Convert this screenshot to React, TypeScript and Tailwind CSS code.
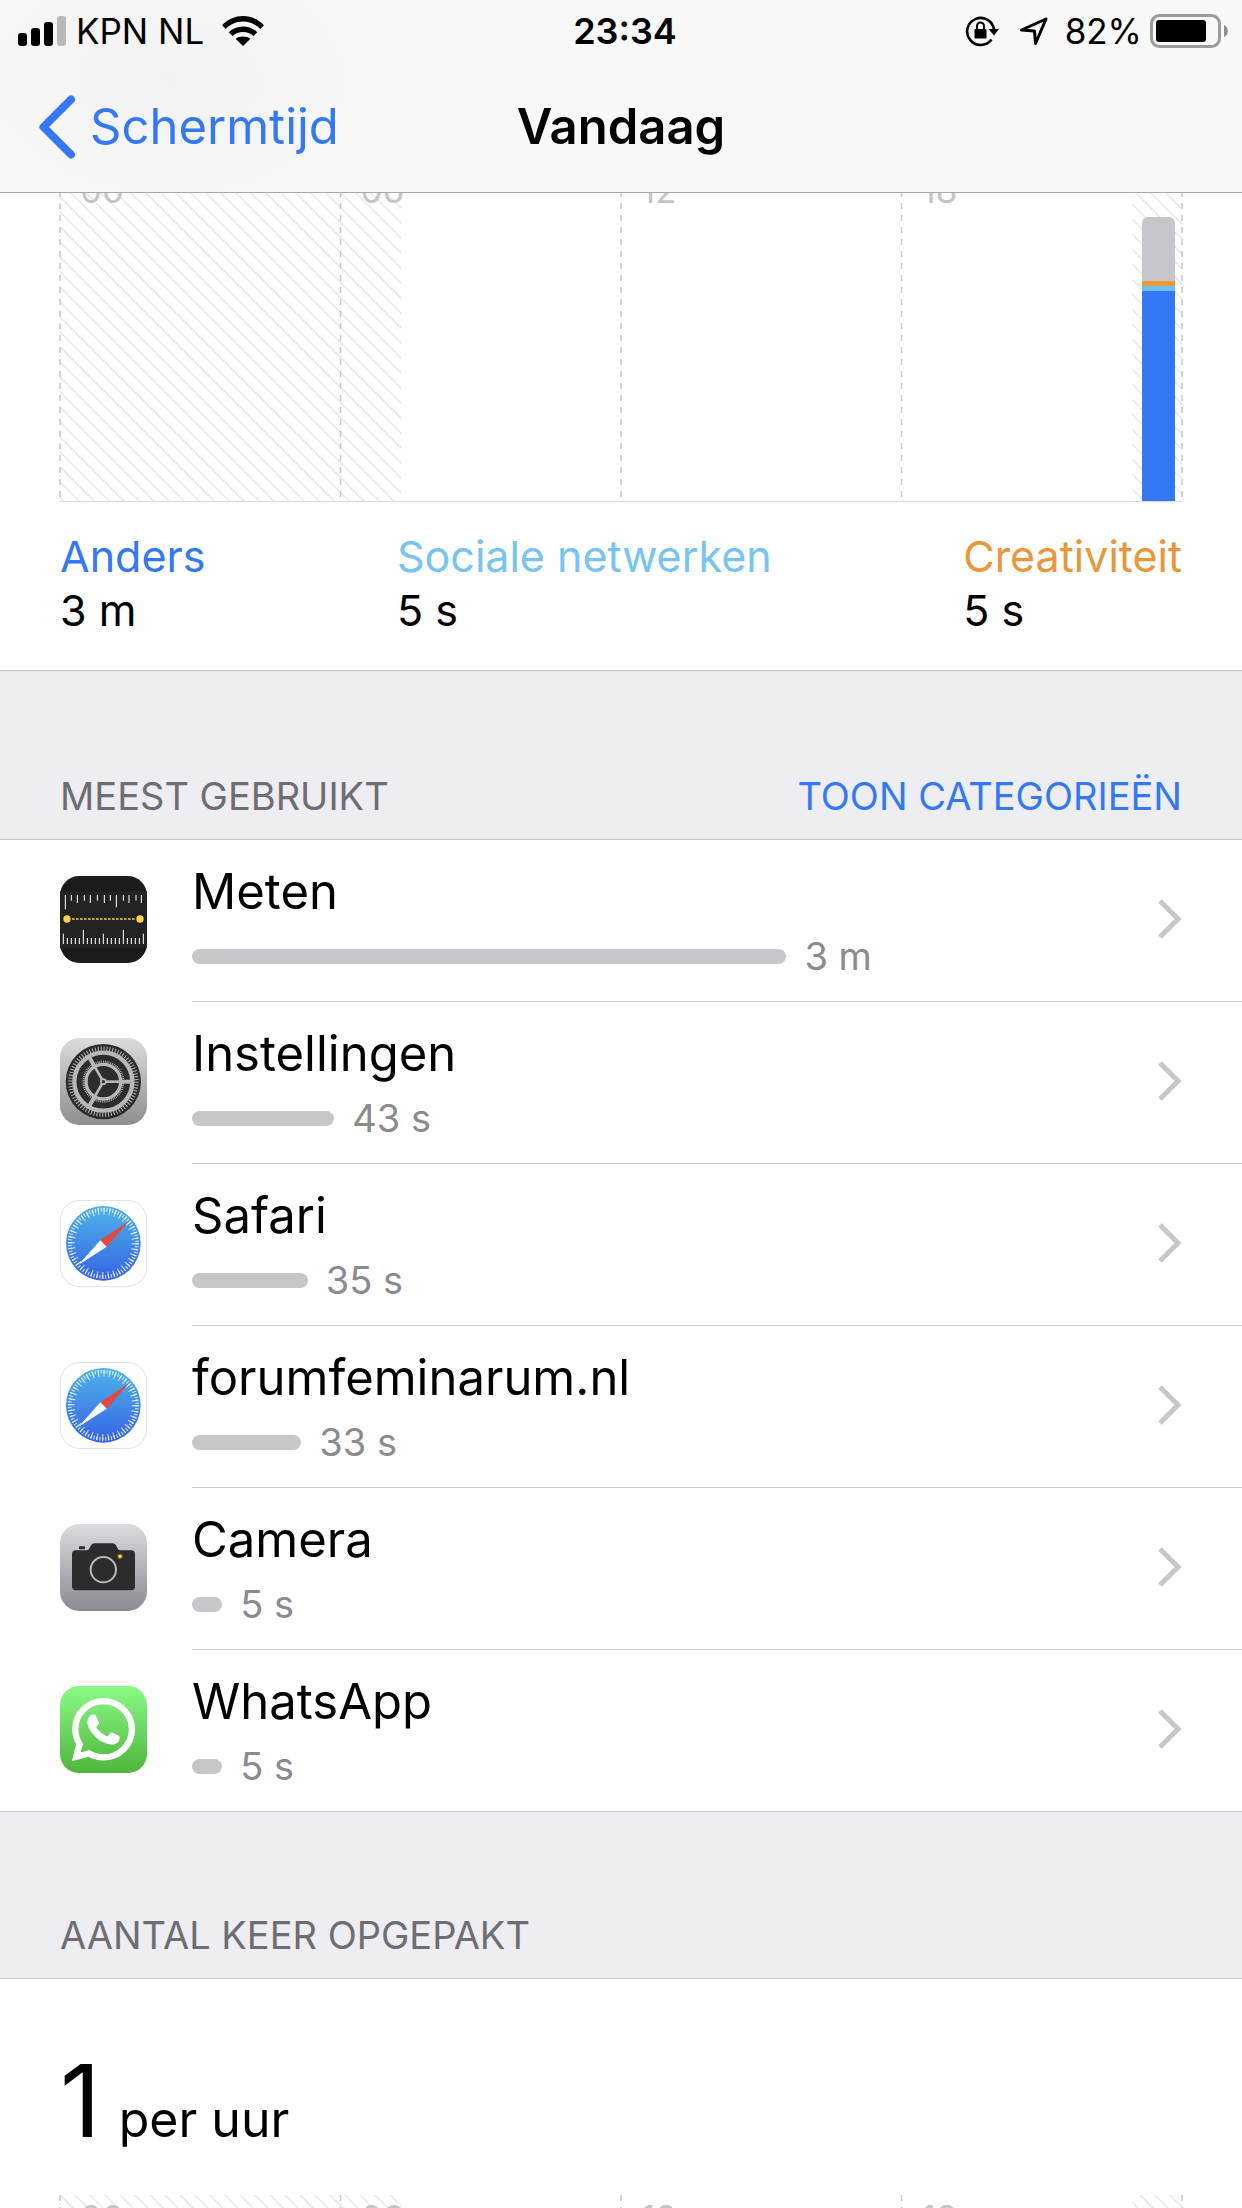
import { useId, type ReactNode } from 'react';
import { FaWhatsapp } from 'react-icons/fa';

/* ---------- Status bar ---------- */

function SignalBars() {
  return (
    <svg className="h-[30px] w-12 shrink-0" viewBox="0 0 48 30" aria-hidden="true">
      <rect x="0" y="17" width="9" height="13" rx="3" />
      <rect x="13" y="12" width="9" height="18" rx="3" />
      <rect x="26" y="6" width="9" height="24" rx="3" />
      <rect x="39" y="0" width="9" height="30" rx="3" fill="#b9b9b9" />
    </svg>
  );
}

function WifiIcon() {
  return (
    <svg className="h-[30px] w-[42px] shrink-0" viewBox="0 0 42 30" aria-hidden="true">
      <path d="M0 9.3C5.6 3.400 13 0 21 0s15.400 3.400 21 9.300l-3.700 3.700C33.700 8.300 27.600 5.600 21 5.600S8.300 8.300 3.700 13z" />
      <path d="M6.700 16.200C10.500 12.500 15.500 10.400 21 10.400s10.500 2.100 14.300 5.800l-3.800 3.800C28.700 17.400 25 15.900 21 15.900s-7.700 1.500-10.500 4.100z" />
      <path d="M13.600 22.800c2-1.500 4.600-2.300 7.400-2.300s5.400.8 7.400 2.300L21 30z" />
    </svg>
  );
}

function RotationLockIcon() {
  return (
    <svg className="h-8 w-[34px] shrink-0" viewBox="0 0 34 32" aria-hidden="true">
      <path d="M26.500 24.500A13.500 13.500 0 1 1 29 14.500" fill="none" stroke="#000" strokeWidth="2.600" />
      <path d="M23.500 14h10.500l-5 6.500z" />
      <rect x="9.500" y="14" width="12" height="9.500" rx="1" />
      <path d="M12 15.500v-4.500a3.500 3.500 0 0 1 7 0v4.500" fill="none" stroke="#000" strokeWidth="2" />
    </svg>
  );
}

function LocationIcon() {
  return (
    <svg className="h-[30px] w-[30px] shrink-0" viewBox="0 0 30 30" aria-hidden="true">
      <path d="M2.500 14 27 3 16.500 27.500 15.500 15z" fill="none" stroke="#000" strokeWidth="3" strokeLinejoin="round" />
    </svg>
  );
}

function BatteryIcon() {
  return (
    <svg className="h-[34px] w-[78px] shrink-0" viewBox="0 0 78 34" aria-hidden="true">
      <rect x="1.500" y="1.500" width="68" height="31" rx="8" fill="none" stroke="#9b9b9b" strokeWidth="3" />
      <rect x="6" y="6" width="50" height="22" rx="3" />
      <path d="M74 11c5 1.500 5 10.500 0 12z" fill="#8c8c8c" />
    </svg>
  );
}

function Header() {
  return (
    <header className="relative z-10 shrink-0 border-b border-[#a9a9ac] bg-[#f8f8f8] bg-[radial-gradient(ellipse_200px_130px_at_170px_80px,#f2f2f2,#f8f8f8)]">
      <div className="grid h-[62px] grid-cols-[1fr_auto_1fr] items-center pr-3.5 pl-[18px] text-[35px]">
        <div className="flex items-center">
          <SignalBars />
          <span className="ml-2.5">KPN NL</span>
          <span className="ml-[18px]"><WifiIcon /></span>
        </div>
        <time className="pl-1 text-[36px] font-semibold">23:34</time>
        <div className="flex items-center justify-end">
          <RotationLockIcon />
          <span className="ml-5"><LocationIcon /></span>
          <span className="ml-4">82%</span>
          <span className="ml-2"><BatteryIcon /></span>
        </div>
      </div>
      <nav className="grid h-[130px] grid-cols-[1fr_auto_1fr] items-center text-[49px]">
        <button type="button" className="flex items-center gap-3.5 justify-self-start pl-[38px] text-[#3478f6]">
          <svg className="h-16 w-[38px]" viewBox="0 0 38 64" fill="none" aria-hidden="true">
            <path d="M33 4.500 5.500 32 33 59.500" stroke="currentColor" strokeWidth="8" strokeLinecap="round" strokeLinejoin="round" />
          </svg>
          Schermtijd
        </button>
        <h1 className="font-semibold">Vandaag</h1>
      </nav>
    </header>
  );
}

/* ---------- Hourly chart ---------- */

const gridLines = ['0%', '25%', '50%', '75%', '100%'];
const hourLabels = ['00', '06', '12', '18'];

function HourChart({ children }: { children?: ReactNode }) {
  const hatch = useId();
  return (
    <div className="relative h-[335px] border-b border-[#dcdcde]">
      <svg className="absolute inset-0 h-full w-full overflow-visible" aria-hidden="true">
        <defs>
          <pattern id={hatch} width="15" height="15" patternUnits="userSpaceOnUse">
            <path d="M-2 -2 17 17M-2 13 2 17M13 -2 17 2" stroke="#e8e8ea" strokeWidth="1.500" />
          </pattern>
        </defs>
        <rect x="0" y="0" width="30.400%" height="100%" fill={`url(#${hatch})`} />
        <rect x="95.600%" y="0" width="4.400%" height="100%" fill={`url(#${hatch})`} />
        {gridLines.map((x) => (
          <line key={x} x1={x} x2={x} y1="0" y2="100%" stroke="#c8c8cc" strokeWidth="1.500" strokeDasharray="6 6" />
        ))}
      </svg>
      <div className="relative grid grid-cols-4 text-[35px] leading-[46px] text-[#c4c4c6]">
        {hourLabels.map((label) => (
          <span key={label} className="pl-5">{label}</span>
        ))}
      </div>
      {children}
    </div>
  );
}

const categories = [
  { name: 'Anders', time: '3 m', color: 'text-[#3478f6]' },
  { name: 'Sociale netwerken', time: '5 s', color: 'text-[#79c3f2]' },
  { name: 'Creativiteit', time: '5 s', color: 'text-[#e8973a]' },
];

/* ---------- App icons, drawn on a 261-unit square ---------- */

const upperTicks = [
  [16, 100], [34, 74], [52, 81], [73, 74], [91, 81], [112, 74], [133, 81],
  [151, 74], [169, 94], [190, 74], [207, 81], [228, 74], [244, 81],
];

function MeasureIcon() {
  return (
    <svg viewBox="0 0 261 261" aria-hidden="true">
      <rect width="261" height="261" rx="58" fill="#1b1b1b" />
      <rect y="46" width="261" height="170" fill="#232323" />
      {upperTicks.map(([x, y]) => (
        <path key={x} d={`M${x} 57V${y}`} stroke="#fff" strokeWidth="3" />
      ))}
      {Array.from({ length: 21 }, (_, i) => {
        const top = i === 5 || i === 15 ? 162 : i % 10 === 0 ? 173 : 186;
        return <path key={i} d={`M${10 + i * 12} 204V${top}`} stroke="#fff" strokeWidth="3" />;
      })}
      <path d="M36 129H228" stroke="#f6d53c" strokeWidth="5" strokeDasharray="8 4" />
      <circle cx="21" cy="129" r="11" fill="#fbd34b" />
      <circle cx="240" cy="129" r="11" fill="#fbd34b" />
    </svg>
  );
}

function SettingsIcon() {
  const metal = useId();
  const fill = `url(#${metal})`;
  return (
    <svg viewBox="0 0 261 261" aria-hidden="true">
      <defs>
        <linearGradient id={metal} gradientUnits="userSpaceOnUse" x1="0" y1="0" x2="0" y2="261">
          <stop offset="0" stopColor="#dcdce0" />
          <stop offset="1" stopColor="#8e8e93" />
        </linearGradient>
      </defs>
      <rect width="261" height="261" rx="58" fill={fill} />
      <circle cx="130" cy="131" r="113" fill="#2d2d2f" />
      <g fill="none" stroke="#b8b8bc">
        <circle cx="130" cy="131" r="99" strokeWidth="13" strokeDasharray="3 5.639" />
        <circle cx="130" cy="131" r="87" strokeWidth="13" />
        <circle cx="130" cy="131" r="60" strokeWidth="6" strokeDasharray="2.500 3.100" />
        <circle cx="130" cy="131" r="52" strokeWidth="10" />
        {[0, 120, 240].map((a) => (
          <g key={a} transform={`rotate(${a} 130 131)`}>
            <path d="M130 131H210" strokeWidth="8" />
            <path d="M182 131H212" strokeWidth="12" />
          </g>
        ))}
      </g>
      <circle cx="130" cy="131" r="10" fill="#b8b8bc" />
      <circle cx="130" cy="131" r="5" fill="#2d2d2f" />
    </svg>
  );
}

function SafariIcon() {
  const sky = useId();
  return (
    <svg viewBox="0 0 261 261" aria-hidden="true">
      <defs>
        <linearGradient id={sky} x1="0" y1="0" x2="0" y2="1">
          <stop offset="0" stopColor="#4fb3ea" />
          <stop offset="1" stopColor="#3563e4" />
        </linearGradient>
      </defs>
      <rect x="1.500" y="1.500" width="258" height="258" rx="57" fill="#fff" stroke="#e3e3e5" strokeWidth="3" />
      <circle cx="130" cy="130" r="112" fill={`url(#${sky})`} />
      <circle cx="130" cy="130" r="101" fill="none" stroke="#fff" strokeOpacity="0.850" strokeWidth="11" strokeDasharray="3 5.813" />
      <circle cx="130" cy="130" r="96" fill="none" stroke="#fff" strokeOpacity="0.850" strokeWidth="20" strokeDasharray="3 13.755" />
      <path d="M207 64 121 121 140 140z" fill="#e5483c" />
      <path d="M55 195 121 121 140 140z" fill="#fff" />
    </svg>
  );
}

function CameraIcon() {
  const metal = useId();
  return (
    <svg viewBox="0 0 261 261" aria-hidden="true">
      <defs>
        <linearGradient id={metal} x1="0" y1="0" x2="0" y2="1">
          <stop offset="0" stopColor="#dcdbe0" />
          <stop offset="1" stopColor="#8b8a90" />
        </linearGradient>
      </defs>
      <rect width="261" height="261" rx="58" fill={`url(#${metal})`} />
      <rect x="57" y="67" width="18" height="9" rx="2" fill="#2c2c2e" />
      <path
        d="M48 79H80C92 79 88 58 105 58H156C173 58 169 79 181 79H213Q225 79 225 91V187Q225 199 213 199H48Q36 199 36 187V91Q36 79 48 79z"
        fill="#2c2c2e"
      />
      <circle cx="130" cy="137" r="38" fill="none" stroke="#b9b9b7" strokeWidth="6" />
      <circle cx="180" cy="97" r="8" fill="#a56d0c" />
      <circle cx="180" cy="97" r="4" fill="#ffe9a0" />
    </svg>
  );
}

function WhatsAppIcon() {
  return (
    <span className="flex h-full items-center justify-center rounded-[19px] bg-linear-to-b from-[#8bfb86] to-[#4fb53c]">
      <FaWhatsapp className="size-[71px] stroke-white stroke-[8px] text-white" aria-hidden="true" />
    </span>
  );
}

/* ---------- Most used list ---------- */

const apps = [
  { name: 'Meten', time: '3 m', share: 63.1, Icon: MeasureIcon },
  { name: 'Instellingen', time: '43 s', share: 15.1, Icon: SettingsIcon },
  { name: 'Safari', time: '35 s', share: 12.3, Icon: SafariIcon },
  { name: 'forumfeminarum.nl', time: '33 s', share: 11.6, Icon: SafariIcon },
  { name: 'Camera', time: '5 s', share: 3.2, Icon: CameraIcon },
  { name: 'WhatsApp', time: '5 s', share: 3.2, Icon: WhatsAppIcon },
];

function AppRow({ name, time, share, Icon }: (typeof apps)[number]) {
  return (
    <li className="group flex">
      <button type="button" className="flex flex-1 items-start pl-[60px] text-left">
        <span className="mt-9 block size-[87px] shrink-0"><Icon /></span>
        <span className="ml-[45px] flex flex-1 items-start border-b border-[#c8c7cc] pt-5 pr-[60px] pb-[13px] group-last:border-b-0">
          <span className="mr-6 flex-1">
            <span className="block text-[49px] leading-16">{name}</span>
            <span className="flex items-center gap-[18px]">
              <span className="h-[15px] rounded-full bg-[#c7c7cb]" style={{ width: `${share}%` }} />
              <span className="text-[38px] leading-16 text-[#8b8b8d]">{time}</span>
            </span>
          </span>
          <svg className="mt-[39px] h-10 w-6 shrink-0" viewBox="0 0 24 40" fill="none" aria-hidden="true">
            <path d="M2 2 20 20 2 38" stroke="#c7c7c9" strokeWidth="5" />
          </svg>
        </span>
      </button>
    </li>
  );
}

function SectionHeader({ title, action }: { title: string; action?: string }) {
  return (
    <div className="flex items-end justify-between border-y border-[#c8c7cc] bg-[#eeedf2] px-[60px] pt-24 pb-4 text-[38px] leading-[54px] text-[#6d6d72]">
      <h2>{title}</h2>
      {action && <button type="button" className="pt-0.5 text-[#3478f6]">{action}</button>}
    </div>
  );
}

export default function App() {
  return (
    <div className="flex h-screen flex-col overflow-hidden bg-white font-['Inter','Liberation_Sans',sans-serif] text-black">
      <Header />
      <main className="min-h-0 flex-1">
        <section className="-mt-[26px] px-[60px] pb-[33px]">
          <HourChart>
            <div className="absolute right-[7px] bottom-0 flex w-[33px] flex-col overflow-hidden rounded-t-md">
              <div className="h-16 bg-[#c7c7cb]" />
              <div className="h-[5px] bg-[#ee9a38]" />
              <div className="h-[5px] bg-[#6fc0ee]" />
              <div className="h-[210px] bg-[#3478f6]" />
            </div>
          </HourChart>
          <dl className="mt-[27px] flex justify-between text-[43px] leading-[54px]">
            {categories.map((c) => (
              <div key={c.name}>
                <dt className={c.color}>{c.name}</dt>
                <dd>{c.time}</dd>
              </div>
            ))}
          </dl>
        </section>

        <SectionHeader title="MEEST GEBRUIKT" action="TOON CATEGORIEËN" />
        <ul>
          {apps.map((app) => (
            <AppRow key={app.name} {...app} />
          ))}
        </ul>

        <SectionHeader title="AANTAL KEER OPGEPAKT" />
        <section className="px-[60px] pt-[62px]">
          <p className="flex items-baseline gap-[18px]">
            <span className="text-[100px] leading-[120px]">1</span>
            <span className="text-[50px] leading-none">per uur</span>
          </p>
          <div className="mt-[34px]">
            <HourChart />
          </div>
        </section>
      </main>
    </div>
  );
}
